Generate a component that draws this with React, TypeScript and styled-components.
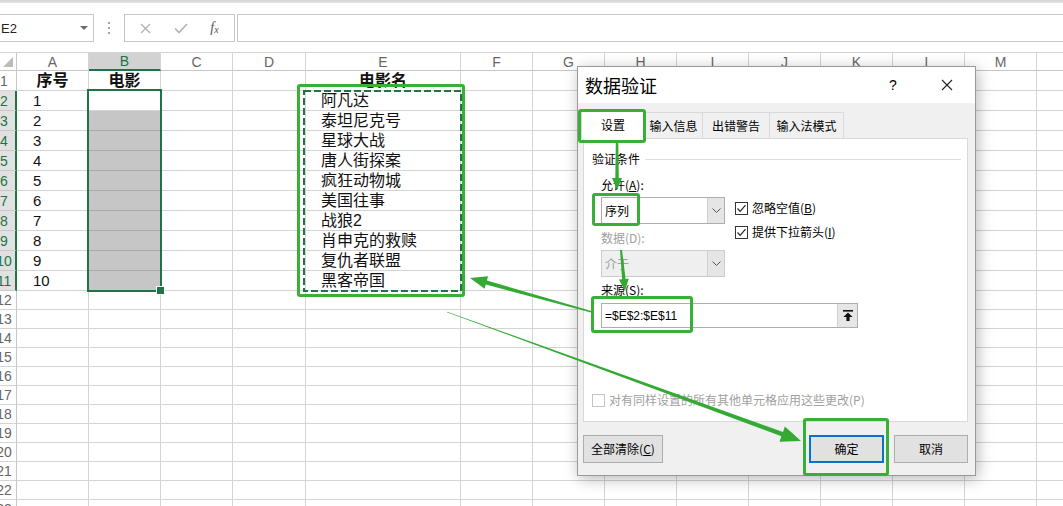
import React from "react";
import styled, { createGlobalStyle } from "styled-components";

const GREEN = "#217346";
const MARK = "#38b038";

const movies = [
  "阿凡达",
  "泰坦尼克号",
  "星球大战",
  "唐人街探案",
  "疯狂动物城",
  "美国往事",
  "战狼2",
  "肖申克的救赎",
  "复仇者联盟",
  "黑客帝国",
];
const columns = ["A", "B", "C", "D", "E", "F", "G", "H", "I", "J", "K", "L", "M", "N"];
const rows = Array.from({ length: 24 }, (_, i) => i + 1);

const GlobalStyle = createGlobalStyle`
  html, body { margin: 0; padding: 0; background: #fff; }
  body { font-family: "Noto Sans CJK SC", "Liberation Sans", sans-serif; }
  * { box-sizing: border-box; }
`;

const Page = styled.div`
  position: relative;
  width: 1063px;
  height: 506px;
  overflow: hidden;
  background: #fff;
`;

const RibbonEdge = styled.div`
  height: 3px;
  background: linear-gradient(#d2d2d2, #e8e8e8);
`;

/* ---------- formula bar ---------- */

const FormulaBar = styled.div`
  display: flex;
  height: 28px;
  margin-top: 11px;
`;

const NameBox = styled.div`
  width: 95px;
  margin-left: -1px;
  border: 1px solid #c6c6c6;
  display: flex;
  align-items: center;
  justify-content: space-between;
  padding: 0 5px 0 1px;
  font: 13px "Liberation Sans", sans-serif;
  color: #222;
`;

const DropTriangle = styled.span`
  width: 0;
  height: 0;
  border-left: 4px solid transparent;
  border-right: 4px solid transparent;
  border-top: 4px solid #6d6d6d;
`;

const Dots = styled.div`
  width: 30px;
  display: flex;
  flex-direction: column;
  align-items: center;
  justify-content: center;
  gap: 3px;

  span {
    width: 2px;
    height: 2px;
    background: #a6a6a6;
  }
`;

const FuncBox = styled.div`
  width: 111px;
  border: 1px solid #c6c6c6;
  display: flex;
  align-items: center;
  justify-content: space-around;
  padding: 0 4px;
`;

const FxText = styled.span`
  font: italic 14px "Liberation Serif", serif;
  color: #555;

  sub {
    font-size: 10px;
    vertical-align: -1px;
  }
`;

const FormulaInput = styled.div`
  flex: 1;
  margin-left: 2px;
  margin-right: -2px;
  border: 1px solid #c6c6c6;
`;

/* ---------- sheet ---------- */

const Sheet = styled.div`
  margin-top: 10px;
  border-top: 1px solid #d4d4d4;
  overflow: hidden;
`;

const GridRow = styled.div<{ $h: number }>`
  display: grid;
  grid-template-columns: 17px 72px 72px 72px 73px 155px repeat(9, 72px);
  height: ${(p) => p.$h}px;
`;

const Corner = styled.div`
  position: relative;
  border-right: 1px solid #c6c6c6;
  border-bottom: 1px solid #c6c6c6;

  &::after {
    content: "";
    position: absolute;
    right: 3px;
    bottom: 3px;
    border-left: 10px solid transparent;
    border-bottom: 10px solid #bcbcbc;
  }
`;

const ColHead = styled.div<{ $active?: boolean }>`
  display: flex;
  align-items: center;
  justify-content: center;
  font: 14px "Liberation Sans", sans-serif;
  color: ${(p) => (p.$active ? GREEN : "#666")};
  background: ${(p) => (p.$active ? "#d2d2d2" : "#fff")};
  border-right: 1px solid #d4d4d4;
  border-bottom: ${(p) => (p.$active ? `2px solid ${GREEN}` : "1px solid #c6c6c6")};
`;

const RowHead = styled.div<{ $active?: boolean }>`
  display: flex;
  align-items: center;
  overflow: hidden;
  font: 14px "Liberation Sans", sans-serif;
  color: ${(p) => (p.$active ? GREEN : "#666")};
  background: ${(p) => (p.$active ? "#e1e1e1" : "#fff")};
  border-right: ${(p) => (p.$active ? `2px solid ${GREEN}` : "1px solid #c6c6c6")};
  border-bottom: 1px solid ${(p) => (p.$active ? "#c8c8c8" : "#d4d4d4")};
`;

const RowNum = styled.span`
  flex: none;
  width: 24px;
  margin-left: -8px;
  text-align: center;
`;

const Cell = styled.div<{ $fill?: boolean; $center?: boolean; $bold?: boolean; $indent?: number; $size?: number }>`
  display: flex;
  align-items: center;
  justify-content: ${(p) => (p.$center ? "center" : "flex-start")};
  padding-left: ${(p) => p.$indent ?? 0}px;
  background: ${(p) => (p.$fill ? "#c6c6c6" : "#fff")};
  border-right: 1px solid #d4d4d4;
  border-bottom: 1px solid ${(p) => (p.$fill ? "#a9a9a9" : "#d4d4d4")};
  font-family: "Liberation Sans", "Noto Sans CJK SC", sans-serif;
  font-size: ${(p) => p.$size ?? 16}px;
  font-weight: ${(p) => (p.$bold ? 700 : 400)};
  line-height: 1;
  color: #111;
  white-space: nowrap;
`;

const Selection = styled.div`
  position: absolute;
  left: 87px;
  top: 89px;
  width: 75px;
  height: 203px;
  border: 2px solid ${GREEN};
  pointer-events: none;

  &::after {
    content: "";
    position: absolute;
    right: -5px;
    bottom: -5px;
    width: 7px;
    height: 7px;
    background: ${GREEN};
    border: 1px solid #fff;
  }
`;

/* ---------- annotations ---------- */

const Mark = styled.div<{ $x: number; $y: number; $w: number; $h: number }>`
  position: absolute;
  left: ${(p) => p.$x}px;
  top: ${(p) => p.$y}px;
  width: ${(p) => p.$w}px;
  height: ${(p) => p.$h}px;
  border: 3px solid ${MARK};
  border-radius: 3px;
  pointer-events: none;
  z-index: 5;
`;

const Overlay = styled.svg`
  position: absolute;
  left: 0;
  top: 0;
  pointer-events: none;
  z-index: 6;
`;

const AntsLayer = styled.svg`
  position: absolute;
  left: 0;
  top: 0;
  pointer-events: none;
  z-index: 1;
`;

/* ---------- dialog ---------- */

const Dialog = styled.div`
  position: absolute;
  left: 577px;
  top: 66px;
  width: 399px;
  border: 1px solid #9a9a9a;
  background: #f0f0f0;
  box-shadow: 2px 3px 14px rgba(0, 0, 0, 0.28);
  z-index: 3;
  font-family: "Noto Sans CJK SC", "Liberation Sans", sans-serif;
  font-size: 12px;
  color: #000;
`;

const TitleBar = styled.div`
  height: 36px;
  background: #fff;
  display: flex;
  align-items: center;
  justify-content: space-between;
  padding-left: 7px;
`;

const Title = styled.div`
  font-size: 18px;
  line-height: 1;
`;

const TitleButtons = styled.div`
  display: flex;
  gap: 8px;
  margin-right: 5px;
  height: 100%;
`;

const TitleButton = styled.div`
  width: 46px;
  display: flex;
  align-items: center;
  justify-content: center;
  font: 14px "Liberation Sans", sans-serif;
`;

const DialogBody = styled.div`
  padding: 6px 7px 12px 5px;
`;

const Tabs = styled.div`
  display: flex;
  align-items: flex-end;
  height: 29px;
  margin-left: -2px;
  position: relative;
  z-index: 1;
`;

const Tab = styled.div<{ $active?: boolean; $w: number }>`
  width: ${(p) => p.$w}px;
  height: ${(p) => (p.$active ? 30 : 26)}px;
  margin-bottom: ${(p) => (p.$active ? -1 : 0)}px;
  display: flex;
  align-items: center;
  justify-content: center;
  background: ${(p) => (p.$active ? "#fff" : "#f0f0f0")};
  border: 1px solid #d9d9d9;
  border-bottom: none;
  margin-left: ${(p) => (p.$active ? 0 : -1)}px;
  line-height: 1;
`;

const Panel = styled.div`
  height: 284px;
  background: #fff;
  border: 1px solid #d9d9d9;
  padding-left: 8px;
`;

const SectionHead = styled.div`
  display: flex;
  align-items: center;
  height: 16px;
  margin-top: 12px;
  line-height: 1;

  &::after {
    content: "";
    flex: 1;
    height: 1px;
    background: #dcdcdc;
    margin: 0 6px 0 5px;
  }
`;

const Indent = styled.div`
  padding-left: 9px;
`;

const Criteria = styled.div`
  display: grid;
  grid-template-columns: 124px auto;
  column-gap: 10px;
  margin-top: 11px;
`;

const Column = styled.div<{ $pad?: number }>`
  display: flex;
  flex-direction: column;
  padding-top: ${(p) => p.$pad ?? 0}px;
`;

const Label = styled.div<{ $muted?: boolean; $gap?: number }>`
  height: 14px;
  line-height: 14px;
  margin-top: ${(p) => p.$gap ?? 0}px;
  color: ${(p) => (p.$muted ? "#a0a0a0" : "#000")};
  font-family: "Noto Sans CJK SC", "Liberation Sans", sans-serif;

  u {
    text-underline-offset: 1px;
  }
`;

const Combo = styled.div<{ $disabled?: boolean }>`
  display: flex;
  height: 27px;
  margin-top: 5px;
  border: 1px solid ${(p) => (p.$disabled ? "#cccccc" : "#adadad")};
  background: ${(p) => (p.$disabled ? "#efefef" : "#fff")};
  color: ${(p) => (p.$disabled ? "#a0a0a0" : "#000")};
`;

const ComboText = styled.div`
  flex: 1;
  display: flex;
  align-items: center;
  padding-left: 3px;
`;

const ComboButton = styled.div`
  width: 17px;
  display: flex;
  align-items: center;
  justify-content: center;
  background: #e5e5e5;
  border-left: 1px solid #cfcfcf;
`;

const CheckRow = styled.div<{ $muted?: boolean; $gap?: number }>`
  display: flex;
  align-items: center;
  gap: 4px;
  height: 16px;
  margin-top: ${(p) => p.$gap ?? 0}px;
  color: ${(p) => (p.$muted ? "#a0a0a0" : "#000")};
  line-height: 1;
  white-space: nowrap;
`;

const Box = styled.span<{ $muted?: boolean }>`
  width: 13px;
  height: 13px;
  flex: none;
  border: 1px solid ${(p) => (p.$muted ? "#c4c4c4" : "#333")};
  background: #fff;
  display: flex;
  align-items: center;
  justify-content: center;
`;

const SourceInput = styled.div`
  display: flex;
  width: 257px;
  height: 25px;
  margin-top: 6px;
  border: 1px solid #adadad;
  background: #fff;
`;

const SourceText = styled.div`
  flex: 1;
  display: flex;
  align-items: center;
  padding-left: 3px;
  font: 12px "Liberation Sans", sans-serif;
`;

const SourceButton = styled.div`
  width: 20px;
  display: flex;
  align-items: center;
  justify-content: center;
  background: #e6e6e6;
  border-left: 1px solid #d0d0d0;
`;

const Footer = styled.div`
  display: flex;
  align-items: center;
  margin-top: 13px;
`;

const Spacer = styled.div`
  flex: 1;
`;

const Button = styled.div<{ $w: number; $primary?: boolean }>`
  width: ${(p) => p.$w}px;
  height: 28px;
  display: flex;
  align-items: center;
  justify-content: center;
  background: #e1e1e1;
  border: ${(p) => (p.$primary ? "2px solid #0a72cc" : "1px solid #adadad")};
  margin-left: ${(p) => (p.$primary ? 0 : 10)}px;
  line-height: 1;

  &:first-child {
    margin-left: 0;
  }
`;

/* ---------- drawings ---------- */

const Chevron = () => (
  <svg width="9" height="5" viewBox="0 0 9 5">
    <polyline points="0.5,0.5 4.5,4.5 8.5,0.5" fill="none" stroke="#555" strokeWidth="1" />
  </svg>
);

const Check = () => (
  <svg width="11" height="11" viewBox="0 0 11 11">
    <polyline points="1.5,5.5 4.2,8.3 9.5,2.2" fill="none" stroke="#222" strokeWidth="1.2" />
  </svg>
);

const CollapseIcon = () => (
  <svg width="10" height="11" viewBox="0 0 10 11">
    <rect x="0" y="0" width="10" height="1.6" fill="#111" />
    <polygon points="5,2.6 9.6,7 6.6,7 6.6,11 3.4,11 3.4,7 0.4,7" fill="#111" />
  </svg>
);

const CloseIcon = () => (
  <svg width="12" height="12" viewBox="0 0 12 12">
    <path d="M1 1 L11 11 M11 1 L1 11" stroke="#222" strokeWidth="1.1" />
  </svg>
);

const ThinX = () => (
  <svg width="11" height="11" viewBox="0 0 11 11">
    <path d="M1 1 L10 10 M10 1 L1 10" stroke="#b3b3b3" strokeWidth="1.4" />
  </svg>
);

const ThinCheck = () => (
  <svg width="14" height="11" viewBox="0 0 14 11">
    <polyline points="1,5.5 5,9.5 13,1" fill="none" stroke="#b3b3b3" strokeWidth="1.6" />
  </svg>
);

type Pt = [number, number];

// tapered arrow: shaft widens from w1 to w2, then a triangular head
function arrowPoints(from: Pt, to: Pt, w1: number, w2: number, headLen: number, headW: number) {
  const dx = to[0] - from[0];
  const dy = to[1] - from[1];
  const len = Math.hypot(dx, dy);
  const ux = dx / len;
  const uy = dy / len;
  const nx = -uy;
  const ny = ux;
  const bx = to[0] - ux * headLen;
  const by = to[1] - uy * headLen;
  const pts: Pt[] = [
    [from[0] + (nx * w1) / 2, from[1] + (ny * w1) / 2],
    [bx + (nx * w2) / 2, by + (ny * w2) / 2],
    [bx + (nx * headW) / 2, by + (ny * headW) / 2],
    to,
    [bx - (nx * headW) / 2, by - (ny * headW) / 2],
    [bx - (nx * w2) / 2, by - (ny * w2) / 2],
    [from[0] - (nx * w1) / 2, from[1] - (ny * w1) / 2],
  ];
  return pts.map((p) => `${p[0].toFixed(1)},${p[1].toFixed(1)}`).join(" ");
}

const arrows = [
  arrowPoints([617, 143], [617, 190], 2.5, 3.5, 12, 10),
  arrowPoints([621, 250], [625, 291], 2, 3.5, 12, 10),
  arrowPoints([592, 312], [470, 278], 1.5, 4, 17, 13),
  arrowPoints([447, 312], [801, 441], 0.4, 4.5, 20, 16),
];

function rowHeight(r: number) {
  return r <= 11 ? 20 : 19;
}

function renderCell(r: number, col: string) {
  const selected = col === "B" && r >= 3 && r <= 11;
  if (r === 1) {
    const text = col === "A" ? "序号" : col === "B" ? "电影" : col === "E" ? "电影名" : "";
    return (
      <Cell key={col} $center $bold>
        {text}
      </Cell>
    );
  }
  if (r >= 2 && r <= 11 && col === "A") {
    return (
      <Cell key={col} $indent={16} $size={15}>
        {r - 1}
      </Cell>
    );
  }
  if (r >= 2 && r <= 11 && col === "E") {
    return (
      <Cell key={col} $indent={15}>
        {movies[r - 2]}
      </Cell>
    );
  }
  return <Cell key={col} $fill={selected} />;
}

export default function App() {
  return (
    <Page>
      <GlobalStyle />
      <RibbonEdge />
      <FormulaBar>
        <NameBox>
          <span>E2</span>
          <DropTriangle />
        </NameBox>
        <Dots>
          <span />
          <span />
          <span />
        </Dots>
        <FuncBox>
          <ThinX />
          <ThinCheck />
          <FxText>
            f<sub>x</sub>
          </FxText>
        </FuncBox>
        <FormulaInput />
      </FormulaBar>

      <Sheet>
        <GridRow $h={18}>
          <Corner />
          {columns.map((c) => (
            <ColHead key={c} $active={c === "B"}>
              {c}
            </ColHead>
          ))}
        </GridRow>
        {rows.map((r) => (
          <GridRow key={r} $h={rowHeight(r)}>
            <RowHead $active={r >= 2 && r <= 11}>
              <RowNum>{r}</RowNum>
            </RowHead>
            {columns.map((c) => renderCell(r, c))}
          </GridRow>
        ))}
      </Sheet>

      <Selection />
      <AntsLayer width="1063" height="506">
        <rect x="304" y="91" width="157" height="200" fill="none" stroke={GREEN} strokeWidth="2" strokeDasharray="7 3" />
      </AntsLayer>

      <Dialog>
        <TitleBar>
          <Title>数据验证</Title>
          <TitleButtons>
            <TitleButton>?</TitleButton>
            <TitleButton>
              <CloseIcon />
            </TitleButton>
          </TitleButtons>
        </TitleBar>
        <DialogBody>
          <Tabs>
            <Tab $active $w={64}>
              设置
            </Tab>
            <Tab $w={59}>输入信息</Tab>
            <Tab $w={68}>出错警告</Tab>
            <Tab $w={75}>输入法模式</Tab>
          </Tabs>
          <Panel>
            <SectionHead>验证条件</SectionHead>
            <Indent>
              <Criteria>
                <Column>
                  <Label>
                    允许(<u>A</u>):
                  </Label>
                  <Combo>
                    <ComboText>序列</ComboText>
                    <ComboButton>
                      <Chevron />
                    </ComboButton>
                  </Combo>
                  <Label $muted $gap={7}>
                    数据(D):
                  </Label>
                  <Combo $disabled>
                    <ComboText>介于</ComboText>
                    <ComboButton>
                      <Chevron />
                    </ComboButton>
                  </Combo>
                </Column>
                <Column $pad={22}>
                  <CheckRow>
                    <Box>
                      <Check />
                    </Box>
                    <span>
                      忽略空值(<u>B</u>)
                    </span>
                  </CheckRow>
                  <CheckRow $gap={8}>
                    <Box>
                      <Check />
                    </Box>
                    <span>
                      提供下拉箭头(<u>I</u>)
                    </span>
                  </CheckRow>
                </Column>
              </Criteria>
              <Label $gap={6}>
                来源(<u>S</u>):
              </Label>
              <SourceInput>
                <SourceText>=$E$2:$E$11</SourceText>
                <SourceButton>
                  <CollapseIcon />
                </SourceButton>
              </SourceInput>
            </Indent>
            <CheckRow $muted $gap={64}>
              <Box $muted />
              <span>对有同样设置的所有其他单元格应用这些更改(P)</span>
            </CheckRow>
          </Panel>
          <Footer>
            <Button $w={80}>
              <span>
                全部清除(<u>C</u>)
              </span>
            </Button>
            <Spacer />
            <Button $w={75} $primary>
              确定
            </Button>
            <Button $w={74}>取消</Button>
          </Footer>
        </DialogBody>
      </Dialog>

      <Mark $x={297} $y={84} $w={168} $h={213} />
      <Mark $x={578} $y={109} $w={68} $h={34} />
      <Mark $x={592} $y={193} $w={48} $h={33} />
      <Mark $x={591} $y={296} $w={102} $h={37} />
      <Mark $x={803} $y={418} $w={86} $h={58} />

      <Overlay width="1063" height="506">
        {arrows.map((pts, i) => (
          <polygon key={i} points={pts} fill="#34aa34" />
        ))}
      </Overlay>
    </Page>
  );
}
